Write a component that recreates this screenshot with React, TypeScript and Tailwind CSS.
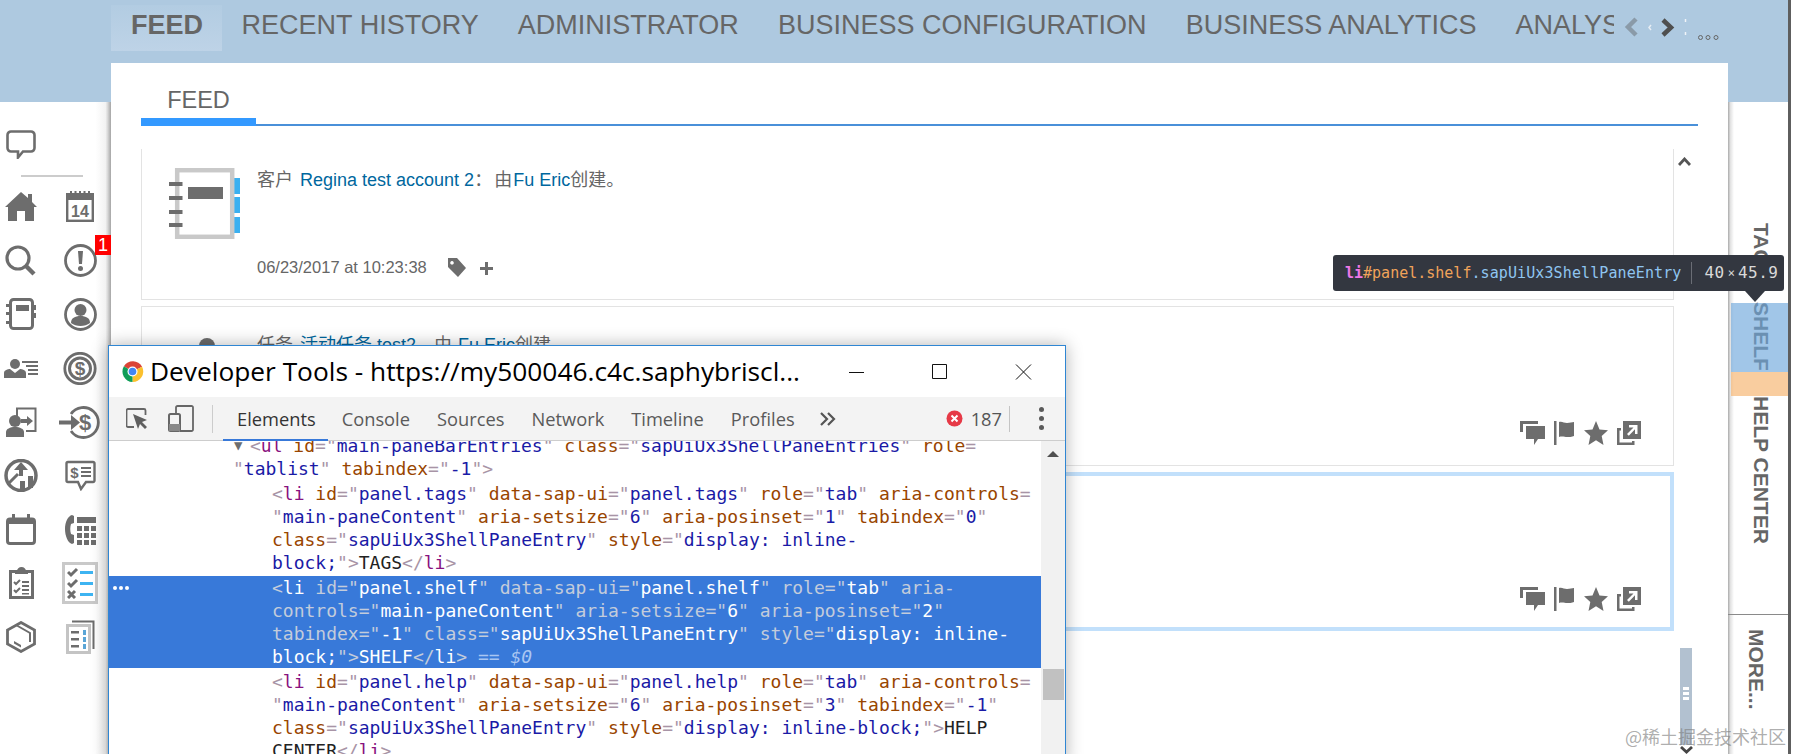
import React from 'react'

const navItems = ['RECENT HISTORY', 'ADMINISTRATOR', 'BUSINESS CONFIGURATION', 'BUSINESS ANALYTICS', 'ANALYSIS']

const codeEntries: { lines: string[]; indent: number; selected?: boolean }[] = [
    { indent: 124, lines: ['<ul id="main-paneBarEntries" class="sapUiUx3ShellPaneEntries" role=', '"tablist" tabindex="-1">'] },
    {
        indent: 163,
        lines: [
            '<li id="panel.tags" data-sap-ui="panel.tags" role="tab" aria-controls=',
            '"main-paneContent" aria-setsize="6" aria-posinset="1" tabindex="0"',
            'class="sapUiUx3ShellPaneEntry" style="display: inline-',
            'block;">TAGS</li>',
        ],
    },
    {
        indent: 163,
        selected: true,
        lines: [
            '<li id="panel.shelf" data-sap-ui="panel.shelf" role="tab" aria-',
            'controls="main-paneContent" aria-setsize="6" aria-posinset="2"',
            'tabindex="-1" class="sapUiUx3ShellPaneEntry" style="display: inline-',
            'block;">SHELF</li>',
        ],
    },
    {
        indent: 163,
        lines: [
            '<li id="panel.help" data-sap-ui="panel.help" role="tab" aria-controls=',
            '"main-paneContent" aria-setsize="6" aria-posinset="3" tabindex="-1"',
            'class="sapUiUx3ShellPaneEntry" style="display: inline-block;">HELP',
            'CENTER</li>',
        ],
    },
]

// tiny html colouring, quote state carries over wrapped lines
const CodeLines = ({ lines, selected, hanging }: { lines: string[]; selected?: boolean; hanging?: boolean }) => {
    const colors = selected
        ? { p: 'text-[#c3ccdb]', t: 'text-white', n: 'text-[#c3ccdb]', v: 'text-white', x: 'text-white' }
        : { p: 'text-[#a894a6]', t: 'text-[#881280]', n: 'text-[#994500]', v: 'text-[#1a1aa6]', x: 'text-[#222222]' }
    let inTag = false
    let inQuote = false
    let opened = false
    return (
        <>
            {lines.map((line, i) => {
                const parts: React.ReactNode[] = []
                const tokens = line.match(/<\/?|>|=|"|[^<>="]+/g) || []
                tokens.forEach((tok, j) => {
                    let cls = colors.x
                    if (inQuote && tok !== '"') cls = colors.v
                    else if (tok === '<' || tok === '</') {
                        cls = colors.p
                        inTag = true
                        opened = true
                    } else if (tok === '>') {
                        cls = colors.p
                        inTag = false
                    } else if (tok === '=') cls = colors.p
                    else if (tok === '"') {
                        cls = colors.p
                        inQuote = !inQuote
                    } else if (inTag && opened) {
                        opened = false
                        const m = tok.match(/^(\w+)(.*)$/)
                        parts.push(<span key={j + 't'} className={colors.t}>{m ? m[1] : tok}</span>)
                        tok = m ? m[2] : ''
                        cls = colors.n
                    } else if (inTag) cls = colors.n
                    parts.push(<span key={j} className={cls}>{tok}</span>)
                })
                return (
                    <div key={i} className={`h-[23px] leading-[23px] whitespace-pre ${hanging && i === 0 ? 'ml-[17px]' : ''}`}>
                        {parts}
                        {selected && i === lines.length - 1 && <span className="text-[#a9c6f2] italic"> == $0</span>}
                    </div>
                )
            })}
        </>
    )
}

const Ic = ({ w, h, children, className }: { w: number; h: number; children: React.ReactNode; className?: string }) => (
    <svg width={w} height={h} viewBox={`0 0 ${w} ${h}`} fill="#6d6d6d" className={className}>
        {children}
    </svg>
)
const line = { fill: 'none', stroke: '#6d6d6d' }

const railIcons: React.ReactNode[] = [
    <Ic w={32} h={29}><path d="M16 0 23 6V2h4v8l5 5h-3v14h-9V19h-8v10H3V15H0z" /></Ic>,
    <Ic w={28} h={31}>
        <rect x="1.2" y="3.2" width="25.6" height="26.6" {...line} strokeWidth="2.4" />
        <rect x="1" y="3" width="26" height="6" />
        <path d="M4 0h2v4H4zM8.500 0h2v4h-2zM13 0h2v4h-2zM17.500 0h2v4h-2zM22 0h2v4h-2z" />
        <text x="14" y="26" textAnchor="middle" fontFamily="Liberation Sans" fontWeight="700" fontSize="16">14</text>
    </Ic>,
    <Ic w={32} h={31}>
        <circle cx="13" cy="13" r="11" {...line} strokeWidth="3.200" />
        <path d="M21 21 29 29" {...line} strokeWidth="4.500" />
    </Ic>,
    <Ic w={33} h={33}>
        <circle cx="16.500" cy="16.500" r="15" {...line} strokeWidth="2.800" />
        <path d="M14 7h5l-1 13h-3z" />
        <circle cx="16.500" cy="24.500" r="2.500" />
    </Ic>,
    <Ic w={30} h={32}>
        <rect x="4.500" y="1.500" width="22" height="29" rx="3" {...line} strokeWidth="3" />
        <rect x="10" y="7" width="13" height="6" />
        <path d="M0 6h6v3H0zM0 14h6v3H0zM0 23h6v3H0zM26 7h4v5h-4zM26 15h4v5h-4z" />
    </Ic>,
    <Ic w={33} h={33}>
        <circle cx="16.500" cy="16.500" r="15" {...line} strokeWidth="2.800" />
        <circle cx="16.500" cy="12" r="6" />
        <path d="M7 25c0-5 4-7 9.500-7s9.500 2 9.500 7c-2.500 2-6 3-9.500 3S9.500 27 7 25z" />
    </Ic>,
    <Ic w={34} h={19}>
        <circle cx="11" cy="5" r="5" />
        <path d="M0 19v-5c0-3 4-4 6-4l5 4 5-4c2 0 6 1 6 4v5z" />
        <path d="M18 2h16v2H18zM22 6h12v2H22zM24 10h10v2H24zM24 14h10v2H24z" />
    </Ic>,
    <Ic w={34} h={33}>
        <circle cx="17" cy="16.500" r="15.200" {...line} strokeWidth="2.800" />
        <circle cx="17" cy="16.500" r="10.500" {...line} strokeWidth="3" />
        <text x="17" y="23" textAnchor="middle" fontFamily="Liberation Sans" fontWeight="700" fontSize="19">$</text>
    </Ic>,
    <Ic w={31} h={30}>
        <path d="M11 11V1.500h18.500V24H20" {...line} strokeWidth="2" />
        <circle cx="9" cy="14" r="6" />
        <path d="M0 30v-5c0-3 4-5 9-5s9 2 9 5v5z" />
        <path d="M15 12h6V9l6 5-6 5v-3h-6z" />
    </Ic>,
    <Ic w={42} h={33}>
        <path d="M12 8A15 15 0 1 1 12 25" {...line} strokeWidth="2.800" />
        <path d="M0 14.500h12V9l9 7.500-9 7.500v-5.500H0z" />
        <text x="26" y="24" textAnchor="middle" fontFamily="Liberation Sans" fontWeight="700" fontSize="22">$</text>
    </Ic>,
    <Ic w={34} h={33}>
        <circle cx="17" cy="16.500" r="15" {...line} strokeWidth="3.500" />
        <path d="M4 25 14 15" {...line} strokeWidth="3" />
        <path d="M17 3l7 8h-5v6h-4v-6h-5zM16 22h5v9h-5zM24 17h5v12h-5z" />
    </Ic>,
    <Ic w={31} h={31}>
        <path d="M3 2h25a1.500 1.500 0 0 1 1.500 1.500v17a1.500 1.500 0 0 1-1.500 1.500H21l-5 7-3-7H3a1.500 1.500 0 0 1-1.500-1.500v-17A1.500 1.500 0 0 1 3 2z" {...line} strokeWidth="2.400" />
        <text x="9.500" y="18" textAnchor="middle" fontFamily="Liberation Sans" fontWeight="700" fontSize="15">$</text>
        <path d="M16 7h10v2H16zM16 11h10v2H16zM16 15h10v2H16z" />
    </Ic>,
    <Ic w={30} h={31}>
        <rect x="1.500" y="5" width="27" height="24.500" rx="2.500" {...line} strokeWidth="3" />
        <path d="M1 5h28v5H1zM6 0h3v7H6zM21 0h3v7h-3z" />
    </Ic>,
    <Ic w={31} h={31}>
        <path d="M7 1c-4 1-7 7-7 14s3 14 7 15l2-1V21L6 20c-1-3-1-7 0-10l3-1V2z" />
        <rect x="12" y="3" width="19" height="6" />
        <path d="M12 12h5v5h-5zM19 12h5v5h-5zM26 12h5v5h-5zM12 19h5v5h-5zM19 19h5v5h-5zM26 19h5v5h-5zM12 26h5v5h-5zM19 26h5v5h-5zM26 26h5v5h-5z" />
    </Ic>,
    <Ic w={25} h={32}>
        <rect x="1.500" y="4.500" width="22" height="26" {...line} strokeWidth="3" />
        <path d="M8 4c0-2 2-4 4.500-4S17 2 17 4l2 1v2H6V5z" />
        <path d="M5 15l2 2 4-4M5 23l2 2 4-4" {...line} strokeWidth="2" />
        <path d="M13 14h7v2h-7zM13 18h7v2h-7zM13 22h7v2h-7zM13 26h7v1.500h-7z" />
    </Ic>,
    <div className="w-[36px] h-[42px] border-[3px] border-[#c9c9c9] flex items-center justify-center">
        <Ic w={26} h={32}>
            <path d="M1 5l3 3 6-6M1 16l3 3 6-6" {...line} strokeWidth="3" />
            <path d="M1 24l7 7M8 24l-7 7" {...line} strokeWidth="3" />
            <path d="M13 4h13v3H13zM13 15h13v3H13zM13 26h13v3H13z" fill="#3db4f2" />
        </Ic>
    </div>,
    <Ic w={30} h={32}>
        <path d="M15 1.500 28.500 9v14L15 30.500 1.500 23V9z" {...line} strokeWidth="2.800" />
        <path d="M10 4 24 12v9" {...line} strokeWidth="2" />
        <path d="M8 20l7 4v2.500l-7-4z" />
    </Ic>,
    <Ic w={29} h={34}>
        <path d="M6 1.500h21.500V29" {...line} strokeWidth="2" />
        <rect x="1.500" y="5.500" width="22" height="27" fill="#fff" stroke="#c4c4c4" strokeWidth="3" />
        <path d="M5 11h8v2.500H5zM5 18h8v2.500H5zM5 25h8v2.500H5z" />
        <path d="M17 10h3v5h-3zM17 17h3v5h-3zM17 24h3v5h-3z" fill="#5aa5d6" />
    </Ic>,
]

const CardIcon = () => (
    <svg width="72" height="71" viewBox="0 0 72 71">
        <path d="M64 10h7v16h-7zM64 29h7v16h-7zM64 49h7v16h-7z" fill="#3bb0f0" />
        <rect x="8.200" y="2.200" width="55" height="66.600" fill="#fff" stroke="#c9c9c9" strokeWidth="4.500" />
        <path d="M0 14h13.500v4H0zM0 28h13.500v4H0zM0 42h13.500v4H0zM0 55h13.500v4H0z" fill="#6d6d6d" />
        <rect x="19" y="19" width="35" height="12" fill="#6d6d6d" />
    </svg>
)

const Actions = () => (
    <div className="flex items-center gap-[9px]">
        <Ic w={25} h={24}>
            <path d="M0 0h18v3H3v8H0z" />
            <path d="M6 5h19v13h-7l-4 6v-6H6z" />
        </Ic>
        <Ic w={21} h={24}>
            <path d="M0 0h2.500v24H0zM5 1c3-1 5 1 8 1s5-1 7-1v14c-2 1-5 1-7 1s-5-1-8 0z" />
        </Ic>
        <Ic w={24} h={24}><path d="M12 0l3.500 8.500L24 9.200l-6.300 5.800L19.500 24 12 19.300 4.500 24l1.800-9L0 9.200l8.500-.7z" /></Ic>
        <Ic w={24} h={24}>
            <path d="M6 0h18v18H6zM12 4v2.500h4.500L10 13l1.800 1.800L18 8.300V13h2.500V4z" fillRule="evenodd" />
            <path d="M0 7h4v2.500H2.500v12H15V20h2.500v4H0z" />
        </Ic>
    </div>
)

const ChromeLogo = () => (
    <svg width="23" height="23" viewBox="0 0 48 48">
        <path d="M24 24 6 13A22 22 0 0 1 44 14z" fill="#db4437" />
        <path d="M24 24 44 14A22 22 0 0 1 24 46z" fill="#fbc02d" />
        <path d="M24 24V46A22 22 0 0 1 6 13z" fill="#0f9d58" />
        <circle cx="24" cy="24" r="10.500" fill="#fff" />
        <circle cx="24" cy="24" r="8" fill="#4285f4" />
    </svg>
)

const DevTools = () => (
    <div className="absolute left-[108px] top-[345px] w-[958px] h-[420px] flex flex-col bg-white border border-[#2f86d3] shadow-[0_0_16px_rgba(0,0,0,0.3)]">
        <div className="h-[51px] flex items-center shrink-0 pl-[12px] font-['Open_Sans',sans-serif] text-black">
            <ChromeLogo />
            <span className="ml-[6px] text-[26.300px] leading-none whitespace-nowrap">Developer Tools - https://my500046.c4c.saphybriscl...</span>
            <svg width="183" height="16" viewBox="0 0 183 16" className="ml-auto mr-[33px]" fill="none" stroke="#111">
                <path d="M0 8.500h15M83.500 .5h14v14h-14zM167 .5l15 15M182 .5l-15 15" />
            </svg>
        </div>
        <div className="h-[44px] shrink-0 flex items-center bg-[#f3f3f3] border-b border-[#cdcdcd] pl-[17px] font-['Open_Sans',sans-serif] text-[18.300px] text-[#5a5a5a]">
            <svg width="22" height="21" viewBox="0 0 22 21" fill="none">
                <path d="M8 19H2a1.500 1.500 0 0 1-1.500-1.500v-15A1.500 1.500 0 0 1 2 1h16a1.500 1.500 0 0 1 1.500 1.500V7" stroke="#666" strokeWidth="1.800" />
                <path d="M7 6l14 6-5 2 5 5-2 2-5-5-2 5z" fill="#5f5f5f" />
            </svg>
            <svg width="26" height="27" viewBox="0 0 26 27" fill="none" className="ml-[20px]">
                <path d="M8 9V2.500A1.500 1.500 0 0 1 9.500 1h14A1.500 1.500 0 0 1 25 2.500v22a1.500 1.500 0 0 1-1.500 1.500H12" stroke="#666" strokeWidth="1.800" />
                <rect x="1" y="9" width="11" height="17" rx="1.500" stroke="#666" strokeWidth="2" />
                <rect x="1" y="19" width="11" height="7" fill="#888" />
            </svg>
            <div className="w-px h-[28px] bg-[#cccccc] ml-[18px] mr-[10px]" />
            <div className="flex h-full items-center">
                <div className="relative h-full flex items-center pl-[14px] pr-[12.500px] text-[#333333]">
                    Elements
                    <div className="absolute left-0 right-0 -bottom-px h-[2px] bg-[#3879d9]" />
                </div>
                {['Console', 'Sources', 'Network', 'Timeline', 'Profiles'].map((t) => (
                    <div key={t} className="px-[13.500px]">{t}</div>
                ))}
            </div>
            <svg width="16" height="14" viewBox="0 0 16 14" fill="none" stroke="#555" strokeWidth="2.200" className="ml-[12px]">
                <path d="M1 1l6 6-6 6M8 1l6 6-6 6" />
            </svg>
            <div className="ml-auto flex items-center mr-[21px]">
                <svg width="17" height="17" viewBox="0 0 17 17">
                    <circle cx="8.500" cy="8.500" r="8" fill="#e63946" />
                    <path d="M5.500 5.500l6 6M11.500 5.500l-6 6" stroke="#fff" strokeWidth="2" />
                </svg>
                <span className="ml-[8px] text-[#555555]">187</span>
                <div className="w-px h-[26px] bg-[#c4c4c4] ml-[7px] mr-[29px]" />
                <div className="flex flex-col gap-[4px]">
                    <div className="w-[5px] h-[5px] rounded-full bg-[#5a5a5a]" />
                    <div className="w-[5px] h-[5px] rounded-full bg-[#5a5a5a]" />
                    <div className="w-[5px] h-[5px] rounded-full bg-[#5a5a5a]" />
                </div>
            </div>
        </div>
        <div className="flex flex-1 min-h-0 overflow-hidden">
            <div className="flex-1 min-w-0 -mt-[8px] font-['DejaVu_Sans_Mono',monospace] text-[18px]">
                {codeEntries.map((e, i) => (
                    <div key={i} className={e.selected ? 'relative my-px bg-[#3879d9]' : 'py-px'}>
                        {e.selected && (
                            <div className="absolute left-[4px] top-[10px] flex gap-[2px]">
                                <div className="w-[4px] h-[4px] rounded-full bg-white" />
                                <div className="w-[4px] h-[4px] rounded-full bg-white" />
                                <div className="w-[4px] h-[4px] rounded-full bg-white" />
                            </div>
                        )}
                        <div style={{ paddingLeft: e.indent }} className="relative">
                            {i === 0 && <span className="absolute left-[125px] top-[1px] text-[#6e6e6e] text-[14px]">▼</span>}
                            <CodeLines lines={e.lines} selected={e.selected} hanging={i === 0} />
                        </div>
                    </div>
                ))}
            </div>
            <div className="w-[24px] shrink-0 bg-[#f1f1f1] relative">
                <div className="w-0 h-0 mx-auto mt-[10px] border-x-[6px] border-x-transparent border-b-[6px] border-b-[#505050]" />
                <div className="absolute left-[2px] right-[1px] top-[228px] h-[31px] bg-[#c1c1c1]" />
            </div>
        </div>
    </div>
)

const ElementTooltip = () => (
    <div className="absolute left-[1333px] top-[255px] w-[451px] h-[36px] rounded-[3px] bg-[#333740] flex items-center pl-[12px] font-['DejaVu_Sans_Mono',monospace] text-[15px] whitespace-nowrap">
        <span className="text-[#ee78e6] font-bold">li</span>
        <span className="text-[#f0a35a]">#panel.shelf</span>
        <span className="text-[#8fc5f0] tracking-[0.1px]">.sapUiUx3ShellPaneEntry</span>
        <div className="w-px h-[22px] bg-[#6a6d75] ml-[10px] mr-[12px]" />
        <span className="text-[#d9d9d9] text-[16px] tracking-[0.5px]">40</span>
        <span className="text-[#d9d9d9] text-[12px] mx-[3px]">×</span>
        <span className="text-[#d9d9d9] text-[16px] tracking-[0.5px]">45.9</span>
        <div className="absolute left-[412px] top-[36px] w-0 h-0 border-x-[10px] border-x-transparent border-t-[11px] border-t-[#333740]" />
    </div>
)

const App = () => {
    return (
        <div className="relative w-[1793px] h-[754px] overflow-hidden bg-white flex font-['Liberation_Sans',sans-serif] text-[#666666]">
            {/* left rail */}
            <div className="w-[111px] shrink-0 flex flex-col">
                <div className="h-[102px] shrink-0 bg-[#aec9e0]" />
                <div className="flex-1 flex flex-col bg-[linear-gradient(90deg,#fff_86%,#f3f3f3_95%,#d8d8d8_97%,#a5a5a5_100%)]">
                    <svg width="30" height="29" viewBox="0 0 30 29" fill="none" className="ml-[6px] mt-[28px]">
                        <path d="M5 1.500h20a3.500 3.500 0 0 1 3.500 3.500v13a3.500 3.500 0 0 1-3.500 3.500H17l-5 6v-6H5A3.500 3.500 0 0 1 1.500 18V5A3.500 3.500 0 0 1 5 1.500z" stroke="#6d6d6d" strokeWidth="2.600" />
                    </svg>
                    <div className="ml-[21px] mt-[16px] w-[62px] h-[2px] bg-[#cccccc]" />
                    <div className="mt-[3px] grid grid-cols-[42px_42px] gap-x-[17px] auto-rows-[53.800px] relative">
                        {railIcons.map((icon, i) => (
                            <div key={i} className="flex items-center justify-center">{icon}</div>
                        ))}
                        <div className="absolute left-[95px] top-[55px] w-[16px] h-[20px] bg-[#ff0000] text-white text-[18px] leading-[20px] text-center">1</div>
                    </div>
                </div>
            </div>

            {/* center */}
            <div className="flex-1 min-w-0 flex flex-col">
                <div className="h-[63px] shrink-0 bg-[#aec9e0] flex">
                    <div className="w-[1503px] overflow-hidden shrink-0">
                        <ul className="flex mt-[5px] text-[27px] w-max">
                            <li className="h-[46px] pb-[5px] flex items-center pl-[20px] pr-[19px] font-bold bg-gradient-to-b from-[#b2cce2] to-[#bed3e7]">FEED</li>
                            {navItems.map((n) => (
                                <li key={n} className="h-[46px] pb-[5px] flex items-center px-[19.600px] whitespace-nowrap">{n}</li>
                            ))}
                        </ul>
                    </div>
                    <svg width="114" height="42" viewBox="0 0 114 42" fill="none" className="shrink-0">
                        <path d="M22 19l-8 8 8 8" stroke="#8a9aa8" strokeWidth="4.500" />
                        <path d="M37 25l-2 2.500 2 2.500" stroke="#e8eef4" strokeWidth="1.500" />
                        <path d="M49 20l8 7.500-8 7.500" stroke="#4f4f4f" strokeWidth="4.500" />
                        <path d="M71.500 19v3M71.500 32v3" stroke="#f0f4f8" strokeWidth="1.500" />
                        <circle cx="86.500" cy="37.500" r="2" stroke="#666" />
                        <circle cx="94" cy="37.500" r="2" stroke="#666" />
                        <circle cx="102" cy="37.500" r="2" stroke="#666" />
                    </svg>
                </div>
                <div className="flex-1 min-h-0 bg-white px-[30px] overflow-hidden">
                    <div className="h-[63px] flex items-end border-b-2 border-[#4a90d9]">
                        <div className="w-[115px] h-[63px] -mb-[2px] text-[23.500px] leading-none text-center pt-[26px] border-b-[8px] border-[#3399ff]">FEED</div>
                    </div>
                    <div className="mt-[23px] flex">
                        <div className="w-[1533px] shrink-0 flex flex-col gap-[6px]">
                            <div className="h-[151px] border border-t-0 border-[#e3e3e3] flex pl-[27px] pt-[19px]">
                                <CardIcon />
                                <div className="ml-[16px] flex flex-col">
                                    <p className="mt-[1px] text-[18px] leading-[22px] text-[#666666] font-['Liberation_Sans','Noto_Sans_CJK_SC',sans-serif]">
                                        客户 <a className="ml-[2px] text-[#00679e]">Regina test account 2</a>：<span className="ml-[2px]">由</span><a className="ml-[1px] text-[#00679e]">Fu Eric</a>创建。
                                    </p>
                                    <div className="mt-[65px] flex items-center text-[16.500px] leading-[22px]">
                                        06/23/2017 at 10:23:38
                                        <Ic w={18} h={19} className="ml-[21px]">
                                            <path d="M0 0h9l9 10-8 9-10-10zM4 3a1.800 1.800 0 1 0 .01 0z" fillRule="evenodd" />
                                        </Ic>
                                        <Ic w={13} h={13} className="ml-[14px] mt-[2px]"><path d="M5 0h3v5h5v3H8v5H5V8H0V5h5z" /></Ic>
                                    </div>
                                </div>
                            </div>
                            <div className="h-[160px] border border-[#e3e3e3] flex flex-col justify-between pr-[32px] pb-[20px]">
                                <div className="flex pt-[27px] pl-[27px]">
                                    <div className="w-[72px] flex justify-center pl-[3px] pt-[4px]">
                                        <div className="w-[16px] h-[16px] rounded-full bg-[#6d6d6d]" />
                                    </div>
                                    <p className="ml-[16px] text-[18px] leading-[22px] text-[#666666] font-['Liberation_Sans','Noto_Sans_CJK_SC',sans-serif]">
                                        任务 <a className="ml-[2px] text-[#00679e]">活动任务 test2</a>，由<a className="ml-[6px] text-[#00679e]">Fu Eric</a>创建。
                                    </p>
                                </div>
                                <div className="flex justify-end"><Actions /></div>
                            </div>
                            <div className="h-[159px] border-[4px] border-[#c2e0fb] flex items-end justify-end pr-[29px] pb-[16px]">
                                <Actions />
                            </div>
                        </div>
                        <div className="ml-[6px] w-[12px] h-[605px] flex flex-col items-center">
                            <svg width="13" height="9" viewBox="0 0 13 9" fill="none" stroke="#555" strokeWidth="2.800" className="mt-[8px] -ml-[4px]">
                                <path d="M1 8l5.500-6 5.500 6" />
                            </svg>
                            <div className="mt-[482px] w-[12px] h-[97px] bg-[#b2c1d0] flex flex-col items-center gap-[2px] pt-[39px]">
                                <div className="w-[6px] h-[3px] bg-white" />
                                <div className="w-[6px] h-[3px] bg-white" />
                                <div className="w-[6px] h-[3px] bg-white" />
                            </div>
                            <svg width="13" height="8" viewBox="0 0 13 8" fill="none" stroke="#444" strokeWidth="2.800" className="mt-[1px]">
                                <path d="M1 1l5.500 5 5.500-5" />
                            </svg>
                        </div>
                    </div>
                </div>
            </div>

            {/* right side tabs */}
            <div className="w-[60px] shrink-0 flex flex-col">
                <div className="h-[102px] shrink-0 bg-[#aec9e0]" />
                <div className="flex-1 flex flex-col bg-[linear-gradient(90deg,#aaa_0%,#e2e2e2_4%,#fff_10%)] text-[21px] font-bold leading-none">
                    <div className="h-[512px] shrink-0 pt-[121px] pl-[6px] flex flex-col items-center">
                        <span className="[writing-mode:vertical-rl]">TAGS</span>
                        <span className="mt-[22px] [writing-mode:vertical-rl]">SHELF</span>
                        <span className="mt-[25px] [writing-mode:vertical-rl] whitespace-nowrap">HELP CENTER</span>
                    </div>
                    <div className="flex-1 border-t border-[#8a8a8a] pt-[14px] pr-[3px] flex flex-col items-center">
                        <span className="[writing-mode:vertical-rl]">MORE...</span>
                    </div>
                </div>
            </div>
            <div className="w-[3px] shrink-0 bg-[#5e5e5e]" />
            <div className="w-[2px] shrink-0 bg-white" />

            {/* inspect highlight over the SHELF tab */}
            <div className="absolute left-[1731px] top-[303px] w-[57px] h-[69px] bg-[#6fa8dc]/65" />
            <div className="absolute left-[1731px] top-[372px] w-[57px] h-[24px] bg-[#f6b26b]/65" />

            <ElementTooltip />
            <DevTools />

            <div className="absolute right-[7px] top-[724px] text-[18px] leading-[24px] text-[#808080]/65 font-['Noto_Sans_CJK_SC',sans-serif]">@稀土掘金技术社区</div>
        </div>
    )
}

export default App
